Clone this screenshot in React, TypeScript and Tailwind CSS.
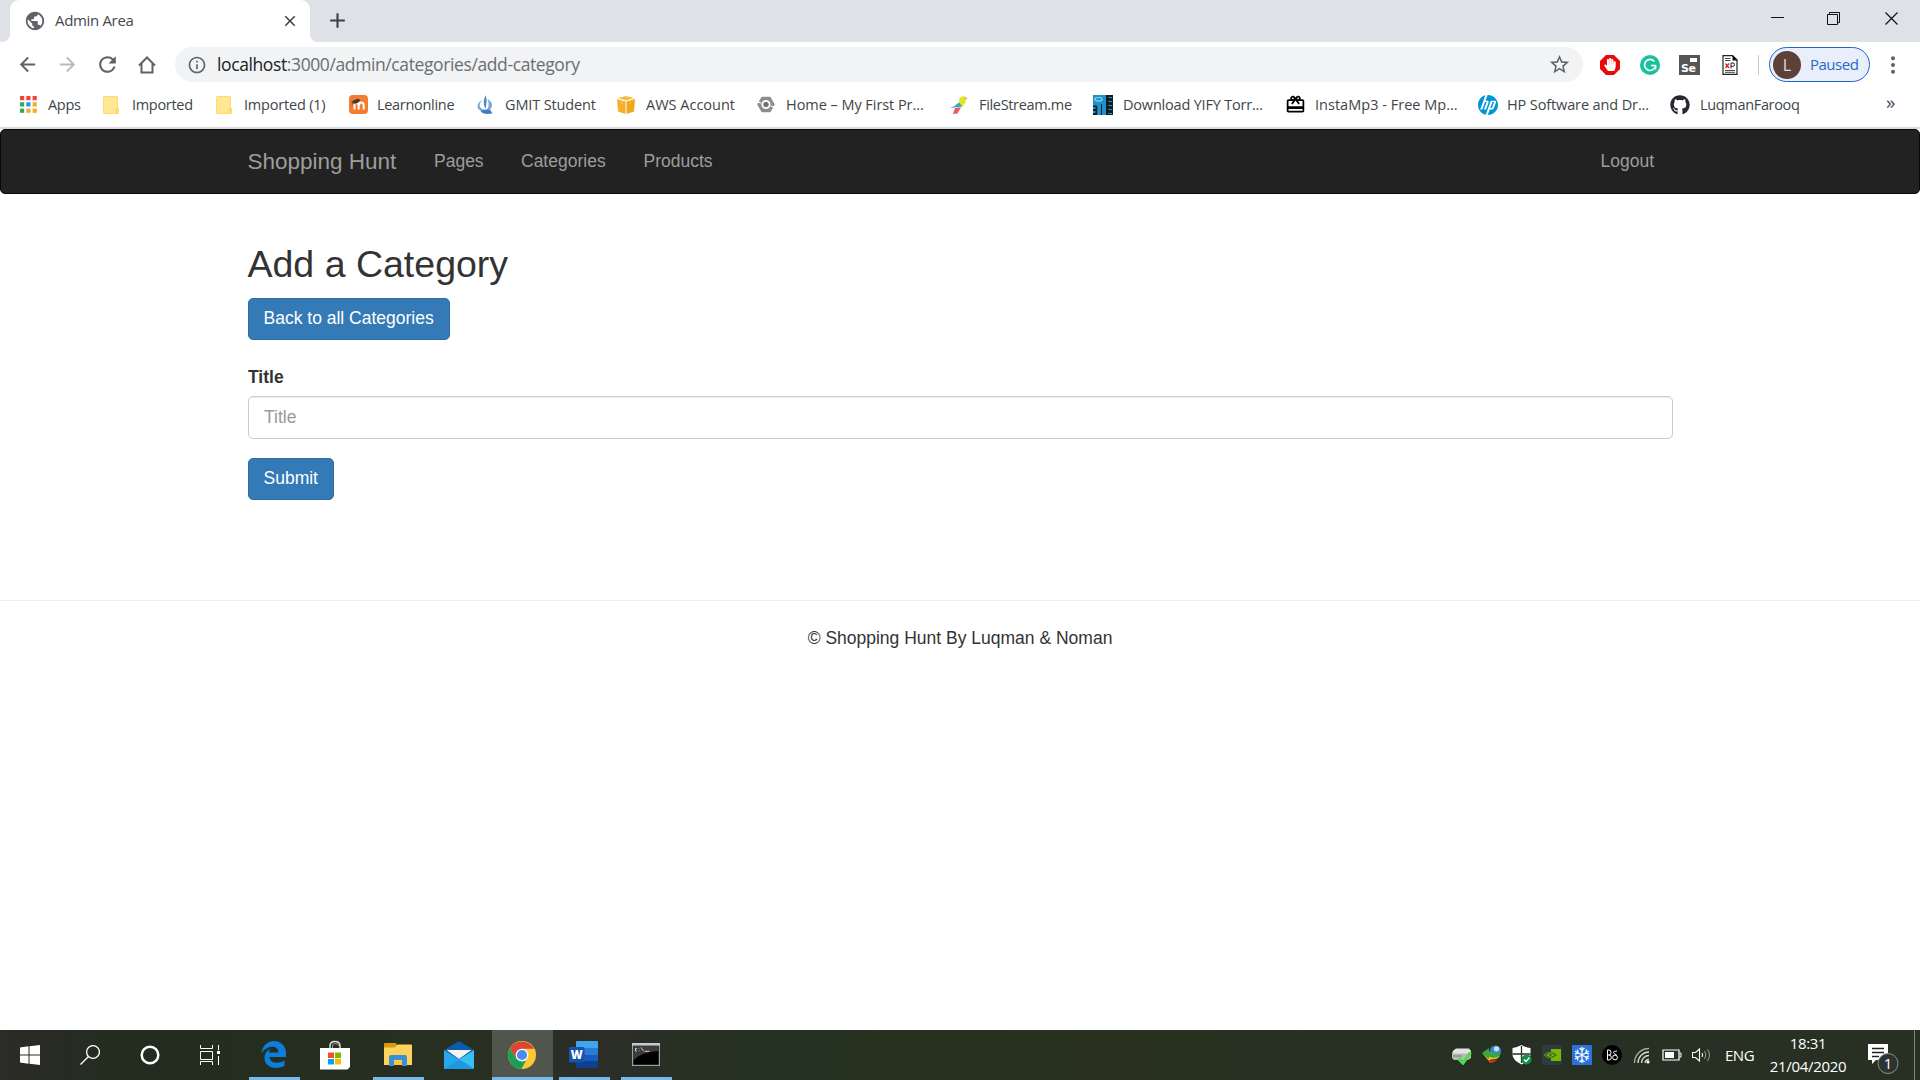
import React from "react";
import { MdArrowBack, MdArrowForward, MdRefresh, MdStarBorder, MdPublic, MdInfoOutline, MdRedeem, MdClose, MdAdd } from "react-icons/md";
import { FaGithub, FaHandPaper } from "react-icons/fa";
import { SiHp } from "react-icons/si";

const ui = "font-['Open_Sans','Noto_Sans',sans-serif]";

const FolderIcon = () => (
  <svg viewBox="0 0 16 18" className="h-[18px] w-4">
    <path d="M0 1.500Q0 0 1.500 0H13.500Q15 0 15 1.500V11.500L16 13V16.500Q16 18 14.500 18H1.500Q0 18 0 16.500Z" fill="#fbdc70" />
    <path d="M1 1H14V12L12.300 13V17H1Z" fill="#ffe794" />
  </svg>
);

const AppsIcon = () => (
  <svg viewBox="0 0 17 17" className="h-[17px] w-[17px]">
    {["#f44336", "#f44336", "#f44336", "#34a853", "#2196f3", "#f9a825", "#34a853", "#f9a825", "#f9a825"].map((c, i) => (
      <rect key={i} x={(i % 3) * 6.3} y={Math.floor(i / 3) * 6.3} width="4.200" height="4.200" fill={c} />
    ))}
  </svg>
);

const MoodleIcon = () => (
  <svg viewBox="0 0 19 19" className="h-[19px] w-[19px]">
    <rect width="19" height="19" rx="4" fill="#f27c2f" />
    <path d="M5.500 14.500V9M9.700 14.500V10.500Q9.700 8.300 11.700 8.300M9.700 10.500Q9.700 8 7.500 8M9.700 10.500Q9.700 7.500 12.200 7.500T14.700 10V14.500" fill="none" stroke="#fff" strokeWidth="2" />
    <path d="M2.500 6.500L8.500 3.800 11.500 5 8.500 8 5 8.500Z" fill="#3c3a38" />
    <path d="M3.300 6V10" stroke="#6b4a32" strokeWidth=".8" />
  </svg>
);

const GmitIcon = () => (
  <svg viewBox="0 0 16 19" className="h-[19px] w-4">
    <path d="M8.500 0Q10.500 5 9.300 9.500L8.500 14 6.800 9.500Q6.200 5 8.500 0Z" fill="#4b8bc8" />
    <path d="M5.500 5Q1 9.500 3.500 12.500T8 14.500L5.500 15.500Q0 15 .5 11T5.500 5ZM10.500 4Q12.500 9.500 11 13L9 15.500Q14.500 15 15 11T10.500 4Z" fill="#78a9d8" />
    <path d="M3 15.500Q8 14 13 14.500L15.500 18.500Q9 19.500 5.500 18Z" fill="#3f7fbf" />
  </svg>
);

const AwsIcon = () => (
  <svg viewBox="0 0 18 18" className="h-[18px] w-[18px]">
    <path d="M0 3L8.500 5.500V18L1 15.500Z" fill="#f4b02d" />
    <path d="M18 3L9.500 5.500V18L17 15.500Z" fill="#f0a81c" />
    <path d="M1 2L9 0 17 2 9 4.500Z" fill="#f7ba45" />
    <path d="M5 4.500V8M13 4.500V8" stroke="#fff" strokeWidth=".5" opacity=".6" />
  </svg>
);

const CloudHexIcon = () => (
  <svg viewBox="0 0 18 17" className="h-[17px] w-[18px]">
    <path d="M5 1.500H13L17 8.500 13 15.500H5L1 8.500Z" fill="#8d8d8d" stroke="#8d8d8d" strokeWidth="1.500" strokeLinejoin="round" />
    <circle cx="9" cy="8.500" r="3.700" fill="#8d8d8d" stroke="#fff" strokeWidth="1.800" />
    <path d="M0 5.500L4 7M18 11.500L14 10" stroke="#fff" strokeWidth="1.200" />
    <circle cx="9" cy="8.500" r="2.200" fill="#6f6f6f" />
  </svg>
);

const ParrotIcon = () => (
  <svg viewBox="0 0 18 18" className="h-[18px] w-[18px]">
    <path d="M9.500 2Q12.500-1 16 1L15.500 6.500 12 11 9 7Z" fill="#e3e320" />
    <path d="M15 1L17.500 2.500 15.500 4Z" fill="#f58fa0" />
    <path d="M9 6.500L12.500 10.500 0 12Q5 10.500 7 8Z" fill="#22b2c4" />
    <path d="M5 12L11 11.300 7.500 17.500 3 18Z" fill="#f4565f" />
  </svg>
);

const YifyIcon = () => (
  <svg viewBox="0 0 20 20" className="h-5 w-5">
    <rect width="20" height="20" fill="#111c24" />
    <path d="M0 0H13V20H4V11H0Z" fill="#1d93c9" />
    <path d="M3.700 11V20M8.500 9V20M3.700 11H0" fill="none" stroke="#111c24" strokeWidth="1" />
    <path d="M0 12H2.500V14H0ZM0 16H2.500V18H0Z" fill="#2097cb" />
    <ellipse cx="5.500" cy="4.300" rx="3.600" ry="1.800" fill="none" stroke="#8fd5f2" strokeWidth="1.200" />
    <path d="M15.500 2.500H19M15.500 6.500H19M15.500 10.500H19M15.500 14.500H19M15.500 18.500H19" stroke="#2599ca" strokeWidth="1.200" />
    <path d="M13.500 0V20" stroke="#111c24" />
  </svg>
);

const HpIcon = () => (
  <span className="grid h-5 w-5 place-items-center rounded-full bg-white">
    <SiHp className="h-5 w-5 text-[#0096d6]" />
  </span>
);

const bookmarks = [
  { label: "Apps", icon: <AppsIcon />, cell: "w-[83px]", pad: "w-[28px]", text: "tracking-[-0.300px]" },
  { label: "Imported", icon: <FolderIcon />, cell: "w-[113px]", pad: "w-[29px]", text: "tracking-[-0.300px]" },
  { label: "Imported (1)", icon: <FolderIcon />, cell: "w-[133px]", pad: "w-[28px]", text: "tracking-[-0.200px]" },
  { label: "Learnonline", icon: <MoodleIcon />, cell: "w-[128px]", pad: "w-[28px]", text: "tracking-[-0.300px]" },
  { label: "GMIT Student", icon: <GmitIcon />, cell: "w-[140px]", pad: "w-[28px]", text: "tracking-[-0.130px]" },
  { label: "AWS Account", icon: <AwsIcon />, cell: "w-[140px]", pad: "w-[29px]", text: "tracking-[0px]" },
  { label: "Home – My First Pr...", icon: <CloudHexIcon />, cell: "w-[193px]", pad: "w-[29px]", text: "tracking-[-0.050px]" },
  { label: "FileStream.me", icon: <ParrotIcon />, cell: "w-[143px]", pad: "w-[29px]", text: "tracking-[-0.330px]" },
  { label: "Download YIFY Torr...", icon: <YifyIcon />, cell: "w-[193px]", pad: "w-[30px]", text: "tracking-[-0.200px]" },
  { label: "InstaMp3 - Free Mp...", icon: <MdRedeem className="h-[21px] w-[21px] -ml-px text-black" />, cell: "w-[192px]", pad: "w-[29px]", text: "tracking-[0.020px]" },
  { label: "HP Software and Dr...", icon: <HpIcon />, cell: "w-[192px]", pad: "w-[29px]", text: "tracking-[-0.120px]" },
  { label: "LuqmanFarooq", icon: <FaGithub className="h-5 w-5 text-[#24292e]" />, cell: "w-[216px]", pad: "w-[30px]", text: "tracking-[-0.330px]" },
];

const WindowButtons = () => (
  <svg viewBox="0 0 128 14" className="h-[14px] w-[128px]" fill="none" stroke="#111">
    <path d="M0 5.500H13M56.500 2.500H66.500V12.500H56.500ZM58.500 2.500V.5H68.500V10.500H66.500" />
    <path d="M114.500.5L126.500 12.500M126.500.5L114.500 12.500" strokeWidth="1.200" />
  </svg>
);

const Tabs = () => (
  <div className="flex h-[42px] bg-[#dee1e6]">
    <div className="w-[10px] bg-white"><div className="h-full rounded-br-[8px] bg-[#dee1e6]" /></div>
    <div className="flex w-[300px] bg-[#dee1e6]">
      <div className="flex w-full items-center rounded-t-[9px] bg-white pb-px pl-[14px] pr-[11px]">
        <MdPublic className="h-[22px] w-[22px] text-[#5f6368]" />
        <span className="ml-[9px] flex-1 text-[15px] tracking-[-0.330px] text-[#45494d]">Admin Area</span>
        <MdClose className="h-[18px] w-[18px] text-[#3c4043]" />
      </div>
    </div>
    <div className="w-[10px] bg-white"><div className="h-full rounded-bl-[8px] bg-[#dee1e6]" /></div>
    <MdAdd className="ml-[5px] mt-[8px] h-[25px] w-[25px] text-[#3c4043]" />
    <div className="ml-auto mr-[21px] mt-[12px]"><WindowButtons /></div>
  </div>
);

const Toolbar = () => (
  <div className="flex h-[45px] items-center bg-white pl-[16px]">
    <MdArrowBack className="h-[23px] w-[23px] text-[#5f6368]" />
    <MdArrowForward className="ml-[17px] h-[23px] w-[23px] text-[#bababc]" />
    <MdRefresh className="ml-[16px] h-[25px] w-[25px] text-[#5f6368]" />
    <svg viewBox="0 0 18 18" className="ml-[18px] h-[18px] w-[18px]" fill="none" stroke="#5f6368" strokeWidth="2">
      <path d="M1 9.500L9 1.500 17 9.500M3.500 7.500V16.500H14.500V7.500" />
    </svg>
    <div className="ml-[19px] flex h-[35px] w-[1408px] items-center rounded-full bg-[#f1f3f4] pl-[12px] pr-[12px]">
      <MdInfoOutline className="h-5 w-5 text-[#5f6368]" />
      <span className="ml-[10px] flex-1 text-[17.500px] tracking-[-0.390px] text-[#6a6e72]"><span className="text-[#202124]">localhost</span>:3000/admin/categories/add-category</span>
      <MdStarBorder className="h-[23px] w-[23px] text-[#5f6368]" />
    </div>
    <svg viewBox="0 0 20 20" className="ml-[17px] h-5 w-5">
      <path d="M6 0H14L20 6V14L14 20H6L0 14V6Z" fill="#e60a0a" />
      <foreignObject x="4" y="3" width="12" height="14"><FaHandPaper className="h-[13px] w-[12px] text-white" /></foreignObject>
    </svg>
    <svg viewBox="0 0 20 20" className="ml-5 h-5 w-5">
      <circle cx="10" cy="10" r="10" fill="#15c39a" />
      <path d="M14.300 6.500A5.500 5.500 0 1 0 15.500 10.500H11M15.500 10V14.500" fill="none" stroke="#fff" strokeWidth="1.700" />
    </svg>
    <div className="ml-[19px] flex h-5 w-[21px] flex-col bg-[#555]">
      <div className="ml-[11px] mt-[3px] h-1 w-[7px] shrink-0 bg-white" />
      <span className="pl-[2px] font-['DejaVu_Sans',sans-serif] text-[11px] font-bold leading-[13px] tracking-[-0.500px] text-white">Se</span>
    </div>
    <svg viewBox="0 0 16 20" className="ml-[22px] h-5 w-4">
      <path d="M1 .7H10.500L15 5V19.300H1Z" fill="#fff" stroke="#222" strokeWidth="1.200" />
      <path d="M10.500 0L16 5.500H10.500Z" fill="#111" />
      <path d="M3 3.500H8.500M3 5.500H8.500M3 15.500H13M3 17.300H13" stroke="#444" />
      <path d="M3.500 8.500L7 13M7 8.500L3.500 13" stroke="#e02020" strokeWidth="1.300" />
      <path d="M9 13.500V8H11Q12.500 8 12.500 9.700T11 11.300H9" fill="none" stroke="#222" strokeWidth="1" />
    </svg>
    <div className="ml-[20px] h-5 w-px bg-[#c9ccd0]" />
    <div className="ml-[10px] flex h-[35px] w-[101px] items-center rounded-full border-[1.500px] border-[#2264cf] bg-[#e9effa] pl-[3px]">
      <span className="grid h-7 w-7 place-items-center rounded-full bg-[#5d4037] text-[16px] text-[#e5dcd8]">L</span>
      <span className="ml-[9px] text-[15px] tracking-[-0.500px] text-[#2b66c9]">Paused</span>
    </div>
    <svg viewBox="0 0 4 18" className="ml-[21px] h-[18px] w-1" fill="#5f6368">
      <circle cx="2" cy="2.200" r="2" /><circle cx="2" cy="9" r="2" /><circle cx="2" cy="15.800" r="2" />
    </svg>
  </div>
);

const Bookmarks = () => (
  <div className="flex h-10 items-center bg-white pb-[5px] pl-5">
    {bookmarks.map((b) => (
      <div key={b.label} className={`flex shrink-0 items-center whitespace-nowrap ${b.cell}`}>
        <span className={`shrink-0 ${b.pad}`}>{b.icon}</span>
        <span className={`text-[14.500px] text-[#414549] ${b.text}`}>{b.label}</span>
      </div>
    ))}
    <span className="pb-[4px] text-[19px] leading-none text-[#4a4d51]">»</span>
  </div>
);

const Navbar = () => (
  <nav className="flex h-[65px] items-center rounded-[5px] border border-[#080808] bg-[#222] pl-[246.500px] text-[17.500px] leading-[25px] text-[#9d9d9d]">
    <span className="w-[186.500px] text-[22.500px]">Shopping Hunt</span>
    <span className="w-[87px]">Pages</span>
    <span className="w-[122.500px]">Categories</span>
    <span>Products</span>
    <span className="ml-auto mr-[265px]">Logout</span>
  </nav>
);

const Content = () => (
  <main className="mx-auto flex w-[1425px] flex-col items-start text-[17.500px] leading-[25px] text-[#333]">
    <h2 className="mt-[50px] text-[37.500px] leading-[41px]">Add a Category</h2>
    <button className="mt-[13px] h-[42px] rounded-[5px] border border-[#2e6da4] bg-[#337ab7] px-[15px] pb-[2px] text-white">Back to all Categories</button>
    <label className="mt-[25px] pl-[0.500px] font-bold">Title</label>
    <input
      placeholder="Title"
      className="mt-[6px] h-[43px] w-full rounded-[5px] border border-[#ccc] px-[15.500px] pb-px shadow-[inset_0_1px_1px_rgba(0,0,0,0.075)] placeholder:text-[#999]"
    />
    <button className="mt-[19px] h-[42px] rounded-[5px] border border-[#2e6da4] bg-[#337ab7] px-[15px] pb-[2px] text-white">Submit</button>
  </main>
);

const StartIcon = () => (
  <svg viewBox="0 0 20 20" className="h-5 w-5" fill="#fff">
    <path d="M0 2.500L8.500 1.300V9.500H0ZM9.500 1.200L20 0V9.500H9.500ZM0 10.500H8.500V18.700L0 17.500ZM9.500 10.500H20V20L9.500 18.800Z" />
  </svg>
);
const SearchIcon = () => (
  <svg viewBox="0 0 20 20" className="h-5 w-5" fill="none" stroke="#fff" strokeWidth="1.300">
    <circle cx="13" cy="7" r="6.400" /><path d="M8.500 11.500L.5 19.500" />
  </svg>
);
const CortanaIcon = () => (
  <svg viewBox="0 0 20 20" className="h-5 w-5"><circle cx="10" cy="10" r="8.300" fill="none" stroke="#fff" strokeWidth="2.500" /></svg>
);
const TaskViewIcon = () => (
  <svg viewBox="0 0 20 20" className="h-5 w-5" fill="none" stroke="#fff">
    <path d="M.5 0V3.500H12.500V0M.5 6.500H12.500V14.500H.5ZM.5 20V16.500H12.500V20M18.500 0V5M18.500 11V20" /><rect x="17.500" y="6.500" width="2" height="2" fill="#fff" />
  </svg>
);
const EdgeIcon = () => (
  <svg viewBox="0 0 25 27" className="h-[27px] w-[25px]">
    <path d="M.3 12.500C1 5 6.500 0 13 0C20 0 25 5 25 12V16H8.500C8.700 22 17 23.500 23.500 19.500V25C14 29.500 3.500 26 3.500 17C3.500 12.500 6 9.500 9.500 8C8.500 9.300 8.200 10.300 8 11.500H17.500C17.500 3.500 5.500 4 .3 12.500Z" fill="#0b7dda" />
  </svg>
);
const StoreIcon = () => (
  <svg viewBox="0 0 30 30" className="h-[30px] w-[30px]">
    <path d="M10 8V6Q10 1.500 15 1.500T20 6V8" fill="none" stroke="#ddd" strokeWidth="1.500" />
    <path d="M12.500 8V6Q12.500 3.500 15.500 3.500T19 6" fill="none" stroke="#999" />
    <path d="M0 8H30V27L27.500 29.500H0Z" fill="#fff" />
    <path d="M8 12.500H14V18H8Z" fill="#f25022" /><path d="M15 12.500H21V18H15Z" fill="#7fba00" />
    <path d="M8 19H14V24.500H8Z" fill="#00a4ef" /><path d="M15 19H21V24.500H15Z" fill="#ffb900" />
  </svg>
);
const ExplorerIcon = () => (
  <svg viewBox="0 0 28 24" className="h-6 w-7">
    <path d="M0 1Q0 0 1 0H11.500L13.500 2V6H0Z" fill="#d99a08" />
    <path d="M0 4.500H10.500L14 1.500H27Q28 1.500 28 2.500V22H0Z" fill="#fdd35c" />
    <path d="M5 23V14Q5 12 7 12H21Q23 12 23 14V23H18V17H10V23Z" fill="#3b8fd6" />
    <path d="M10 22V18H18V22Z" fill="#f7c83f" />
  </svg>
);
const MailIcon = () => (
  <svg viewBox="0 0 30 28" className="h-7 w-[30px]">
    <path d="M0 9L14 .5Q15 0 16 .5L30 9L15 20Z" fill="#0d5aa7" />
    <path d="M2.500 9H27.500L15 18Z" fill="#f3f3f3" />
    <path d="M0 9L30 28H0Z" fill="#28a8ea" /><path d="M30 9V28L15 18.500Z" fill="#35c1f5" /><path d="M0 28L15 18.500 30 28Z" fill="#1e98e0" />
  </svg>
);
const ChromeIcon = () => (
  <svg viewBox="0 0 28 28" className="h-7 w-7">
    <circle cx="14" cy="14" r="14" fill="#fcc934" />
    <path d="M1.900 7A14 14 0 0 1 26.100 7.700H14L8 17.500Z" fill="#dc4437" />
    <path d="M1.900 7L8 17.500 14 20.500 18 19.500 13.500 28A14 14 0 0 1 1.900 7Z" fill="#1a9f58" />
    <circle cx="14" cy="14" r="6.300" fill="#fff" /><circle cx="14" cy="14" r="5.100" fill="#4c8bf5" />
  </svg>
);
const WordIcon = () => (
  <svg viewBox="0 0 29 27" className="h-[27px] w-[29px]">
    <path d="M7 1Q7 0 8 0H28Q29 0 29 1V7H7Z" fill="#41a5ee" /><path d="M7 7H29V14H7Z" fill="#2b7cd3" />
    <path d="M7 14H29V20.500H7Z" fill="#185abd" /><path d="M7 20.500H29V26Q29 27 28 27H8Q7 27 7 26Z" fill="#103f91" />
    <rect y="6" width="15.500" height="15.500" rx="1.200" fill="#1753ad" />
    <text x="7.750" y="18" textAnchor="middle" fontFamily="Open Sans" fontWeight="800" fontSize="11.500" fill="#fff">W</text>
  </svg>
);
const CmdIcon = () => (
  <svg viewBox="0 0 28 23" className="h-[23px] w-7">
    <rect x=".6" y=".6" width="26.800" height="21.800" fill="#000" stroke="#9ba0a4" strokeWidth="1.200" />
    <path d="M0 0H28V2.800H0Z" fill="#c5cacd" />
    <path d="M1.200 2.800H26.800V8Q8 9 1.200 18Z" fill="#3d3d3d" />
    <path d="M5 5.500H3.500V8H5M7 5.500V6M7 7.500V8M9 4.500L11.500 8M12.500 8.300H17.500" fill="none" stroke="#ddd" strokeWidth=".9" />
  </svg>
);

const tasks = [
  { icon: <EdgeIcon />, open: true, cell: "ml-[9px] w-[51px]" },
  { icon: <StoreIcon />, open: false, cell: "ml-[10px] w-[52px]" },
  { icon: <ExplorerIcon />, open: true, cell: "ml-[11px] w-[51px]" },
  { icon: <MailIcon />, open: false, cell: "ml-[10px] w-[52px]" },
  { icon: <ChromeIcon />, open: true, cell: "ml-[6px] w-[61px] bg-[#51564d]" },
  { icon: <WordIcon />, open: true, cell: "ml-[6px] w-[51px]" },
  { icon: <CmdIcon />, open: true, cell: "ml-[11px] w-[51px]" },
];

const tray = [
  <svg viewBox="0 0 20 20" className="h-5 w-5">
    <path d="M1 6L4 4H17L19 6V13L16 15H2L0 13V8Z" fill="#b9b9b9" /><path d="M1 6L4 3.500H17L19 6 17 8.500H1Z" fill="#e3e3e3" /><path d="M1 11H10" stroke="#777" />
    <path d="M6.500 13.500L11 18 18.500 7.500" fill="none" stroke="#4fdc4a" strokeWidth="3.200" />
  </svg>,
  <svg viewBox="0 0 20 20" className="h-5 w-5">
    <circle cx="13.500" cy="6" r="5.500" fill="#3f82d2" /><circle cx="14.500" cy="3.800" r="2.600" fill="#c6e4ea" />
    <path d="M0 8L7 3V6Q10 9 19 8L17 12Q11 14 7 11.500V14Z" fill="#37a83c" />
    <path d="M0 8L7 14V11.500Q11 14 18 11Q15 15 8 14.500V17Z" fill="#f1c821" /><path d="M1 10L7 17V15Q11 16.500 16 14Q12 18.500 7 17.500Z" fill="#e2352b" />
  </svg>,
  <svg viewBox="0 0 20 20" className="h-5 w-5">
    <path d="M9.500 0Q14 2.500 18.500 3V9Q18.500 15 9.500 19.500Q0 15 .5 9V3Q5 2.500 9.500 0Z" fill="#fff" />
    <path d="M9.500 1V18M.5 9H18.500" stroke="#27301f" strokeWidth="1.300" /><circle cx="14.500" cy="14.500" r="5" fill="#128f49" />
    <path d="M12 14.500L14 16.500 17.500 12.500" fill="none" stroke="#fff" strokeWidth="1.300" />
  </svg>,
  <svg viewBox="0 0 20 20" className="h-5 w-5">
    <rect width="20" height="20" rx="1.500" fill="#2f3a42" /><path d="M9 4H19V16H9Z" fill="#76b900" />
    <path d="M2 10Q8 4 15 10Q8 16 2 10Z" fill="#3f6a0a" stroke="#5d8f0d" strokeWidth="1" /><path d="M5 10Q8 7 12 10Q8 13 5 10Z" fill="none" stroke="#8fc43a" strokeWidth=".8" />
  </svg>,
  <svg viewBox="0 0 20 20" className="h-5 w-5">
    <rect width="20" height="20" rx="1" fill="#2a72dd" />
    <path d="M10 2V18M3 6L17 14M17 6L3 14M7.500 3L10 5.500 12.500 3M7.500 17L10 14.500 12.500 17M3 9L6 7.700 5.500 4.500M17 11L14 12.300 14.500 15.500M17 9L14 7.700 14.500 4.500M3 11L6 12.300 5.500 15.500" fill="none" stroke="#e9f3ff" strokeWidth="1.400" />
  </svg>,
  <svg viewBox="0 0 20 20" className="h-5 w-5">
    <circle cx="10" cy="10" r="10" fill="#000" />
    <path d="M5.500 5V15M5.500 5H7Q9 5 9 7.500T7 10H5.500M7 10Q9.300 10 9.300 12.500T7 15H5.500" fill="none" stroke="#fff" /><circle cx="13" cy="12.500" r="2.400" fill="none" stroke="#fff" /><path d="M15 6Q10 6.500 12 8.300L15 10.500" fill="none" stroke="#fff" strokeWidth=".9" />
  </svg>,
  <svg viewBox="0 0 20 20" className="h-5 w-5" fill="none" strokeWidth="1.300">
    <path d="M2.500 18A14.500 14.500 0 0 1 17 3.500" stroke="#a9ada5" /><path d="M6 18A11 11 0 0 1 17 7M9.500 18A7.500 7.500 0 0 1 17 10.500M13 18A4 4 0 0 1 17 14.500" stroke="#d5d8d2" /><circle cx="16" cy="17" r="1.600" fill="#fff" />
  </svg>,
  <svg viewBox="0 0 20 20" className="h-5 w-5" fill="none" stroke="#fff">
    <path d="M1 5H17V15H1Z" strokeWidth="1.200" /><path d="M17.500 8H19V12H17.500" /><path d="M3 7H12V13H3Z" fill="#fff" stroke="none" />
  </svg>,
  <svg viewBox="0 0 20 20" className="h-5 w-5" fill="none" stroke="#fff" strokeWidth="1.100">
    <path d="M.5 7.500H3.500L7.500 4V16L3.500 12.500H.5Z" /><path d="M10 8Q11.300 10 10 12" /><path d="M12.500 6Q15 10 12.500 14M15.500 4.500Q19.500 10 15.500 16" stroke="#8f948b" />
  </svg>,
];

const Taskbar = () => (
  <footer className="flex h-[50px] w-full bg-[linear-gradient(90deg,#2b2b27_0px,#232d1f_130px,#262f20_420px,#2c2e27_600px,#243120_760px,#29301f_1100px,#253022_1450px,#283024_1920px)]">
    <div className="flex items-center gap-[40px] pl-5">
      <StartIcon /><SearchIcon /><CortanaIcon /><TaskViewIcon />
    </div>
    <div className="ml-[20px] flex">
      {tasks.map((t, i) => (
        <div key={i} className={`flex flex-col ${t.cell}`}>
          <div className="grid h-[47px] place-items-center pr-[2px] pt-[2px]">{t.icon}</div>
          {t.open && <div className="h-[3px] bg-[#76b9ed]" />}
        </div>
      ))}
    </div>
    <div className="ml-auto flex items-center">
      {tray.map((icon, i) => (
        <div key={i} className="grid w-[30px] place-items-center">{icon}</div>
      ))}
      <span className="ml-[8px] w-[44px] text-[15px] tracking-[-0.500px] text-white">ENG</span>
      <div className="flex w-[78px] flex-col text-center text-[15px] leading-[23px] tracking-[-0.300px] text-white">
        <span>18:31</span>
        <span>21/04/2020</span>
      </div>
      <svg viewBox="0 0 32 32" className="ml-[20px] mt-[8px] h-8 w-8">
        <path d="M1 1H21V17H9L5 21V17H1Z" fill="#fff" />
        <path d="M5 5.500H17M5 9.500H17M5 13.500H12" stroke="#222" strokeWidth="1.300" />
        <circle cx="21" cy="20.500" r="10" fill="#2f3330" stroke="#8c8f8a" />
        <text x="21" y="26" textAnchor="middle" fontFamily="Open Sans" fontSize="15" fill="#fff">1</text>
      </svg>
      <div className="ml-[15px] mr-[5px] h-[50px] w-px bg-[#82867e]" />
    </div>
  </footer>
);

export default function App() {
  return (
    <div className={`flex h-[1080px] w-[1920px] flex-col overflow-hidden bg-white ${ui}`}>
      <Tabs />
      <Toolbar />
      <Bookmarks />
      <div className="h-[2px] bg-[#dadce0]" />
      <div className="flex-1 font-['Liberation_Sans',sans-serif]">
        <Navbar />
        <Content />
        <div className="mt-[100px] border-t border-[#eee] pt-[25px] text-center text-[17.500px] leading-[25px] text-[#333]">
          © Shopping Hunt By Luqman &amp; Noman
        </div>
      </div>
      <Taskbar />
    </div>
  );
}
